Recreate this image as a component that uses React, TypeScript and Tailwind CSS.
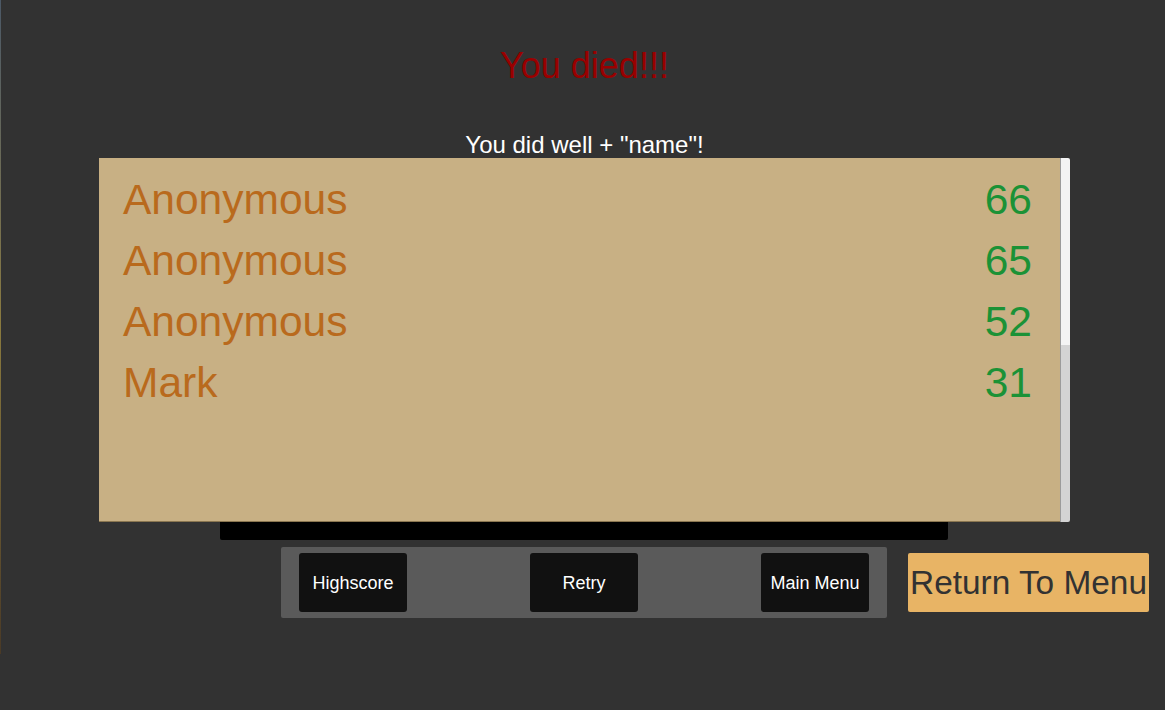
const scores = [
  { name: 'Anonymous', score: 66 },
  { name: 'Anonymous', score: 65 },
  { name: 'Anonymous', score: 52 },
  { name: 'Mark', score: 31 },
];

const MenuButton = ({ label }: { label: string }) => (
  <button className="w-[108px] h-[59px] bg-[#111111] rounded-[3px] text-white text-[18px] leading-none">
    {label}
  </button>
);

export default function App() {
  return (
    <div
      className="flex w-[1165px] h-[710px] overflow-hidden bg-[#323232]"
      style={{ fontFamily: '"Liberation Sans", Arial, sans-serif' }}
    >
      {/* thin edge of the game view */}
      <div className="w-px h-[654px] shrink-0 bg-gradient-to-b from-[#4b5866] via-[#8a7a3e] to-[#4a3a26]" />

      <div className="flex flex-col pl-[98px] w-[1069px] shrink-0">
        <h1 className="mt-[48px] text-center text-[36px] leading-[36px] text-[#990000]">You died!!!</h1>
        <p className="mt-[49px] text-center text-[24px] leading-[24px] text-white">You did well + "name"!</p>

        {/* Highscore list */}
        <div className="mt-px flex h-[364px]">
          <div className="flex-1 bg-[#c8b084] border-b border-[#8a7650] pt-[11px] pl-[24px] pr-[28px]">
            {scores.map((s, i) => (
              <div key={i} className="flex justify-between text-[42.5px] leading-[61px]">
                <span className="text-[#b96a1d]">{s.name}</span>
                <span className="text-[#1b9236]">{s.score}</span>
              </div>
            ))}
          </div>
          <div className="w-[10px] flex flex-col border-l border-[#9c9c9c] rounded-r-[2px] overflow-hidden">
            <div className="h-[187px] bg-[#f4f4f4]" />
            <div className="flex-1 bg-[#d4d4d4]" />
          </div>
        </div>

        <div className="self-center w-[728px] h-[18px] bg-black rounded-b-[2px] mr-[1px]" />

        <div className="mt-[7px] flex items-center gap-[21px] pl-[182px]">
          <div className="w-[606px] h-[71px] shrink-0 bg-[#5a5a5a] rounded-[2px] flex items-center justify-between px-[18px]">
            <MenuButton label="Highscore" />
            <MenuButton label="Retry" />
            <MenuButton label="Main Menu" />
          </div>
          <button className="w-[241px] h-[59px] shrink-0 bg-[#e8b465] rounded-[2px] text-[#323232] text-[33.4px] leading-none">
            Return To Menu
          </button>
        </div>
      </div>
    </div>
  );
}
